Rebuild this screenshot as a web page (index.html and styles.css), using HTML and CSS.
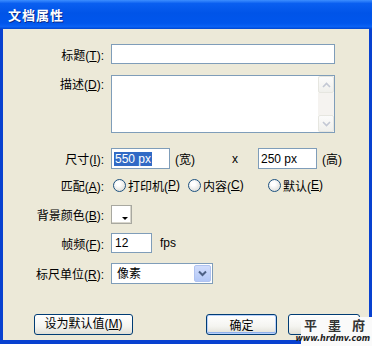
FILE: index.html
```html
<!DOCTYPE html>
<html lang="zh-CN">
<head>
<meta charset="utf-8">
<title>文档属性</title>
<link rel="stylesheet" href="styles.css">
</head>
<body>
<div class="window">
  <div class="titlebar"><span class="title">文档属性</span></div>
  <div class="frame">
    <div class="client">
      <div class="row r-title">
        <label class="label">标题(<u>T</u>):</label>
        <div class="input w-title"></div>
      </div>
      <div class="row r-desc">
        <label class="label top">描述(<u>D</u>):</label>
        <div class="textarea">
          <div class="scroll">
            <div class="sbtn"><svg width="9" height="6" viewBox="0 0 9 6"><path d="M1 5 L4.5 1.5 L8 5" fill="none" stroke="#c3c8d4" stroke-width="1.6"/></svg></div>
            <div class="strack"></div>
            <div class="sbtn"><svg width="9" height="6" viewBox="0 0 9 6"><path d="M1 1 L4.5 4.5 L8 1" fill="none" stroke="#c3c8d4" stroke-width="1.6"/></svg></div>
          </div>
        </div>
      </div>
      <div class="row r-size">
        <label class="label">尺寸(<u>I</u>):</label>
        <div class="input w-size"><span class="sel">550 px</span></div>
        <span class="unit1">(宽)</span>
        <span class="times">x</span>
        <div class="input w-size"><span class="val">250 px</span></div>
        <span class="unit2">(高)</span>
      </div>
      <div class="row r-match">
        <label class="label">匹配(<u>A</u>):</label>
        <span class="opt o1"><span class="radio"></span>打印机(<u>P</u>)</span>
        <span class="opt o2"><span class="radio"></span>内容(<u>C</u>)</span>
        <span class="opt o3"><span class="radio"></span>默认(<u>E</u>)</span>
      </div>
      <div class="row r-color">
        <label class="label">背景颜色(<u>B</u>):</label>
        <div class="swatch"><span class="tri"></span></div>
      </div>
      <div class="row r-fps">
        <label class="label">帧频(<u>F</u>):</label>
        <div class="input w-fps"><span class="val">12</span></div>
        <span class="fps">fps</span>
      </div>
      <div class="row r-ruler">
        <label class="label">标尺单位(<u>R</u>):</label>
        <div class="select">
          <span class="val">像素</span>
          <span class="arrow"><svg width="9" height="7" viewBox="0 0 9 7"><path d="M1 1.5 L4.5 5 L8 1.5" fill="none" stroke="#4d6185" stroke-width="2"/></svg></span>
        </div>
      </div>
      <div class="buttons">
        <button class="btn b-default">设为默认值(<u>M</u>)</button>
        <button class="btn b-ok">确定</button>
        <button class="btn b-cancel"></button>
      </div>
    </div>
  </div>
  <div class="watermark">
    <span class="wm-logo">平 墨 府</span>
    <span class="wm-url">www.hrdmv.com</span>
  </div>
</div>
</body>
</html>
```
FILE: styles.css
```css
* { box-sizing: border-box; }
html, body { margin: 0; padding: 0; background: #ffffff; }
body {
  width: 372px;
  height: 346px;
  overflow: hidden;
  font-family: "Liberation Sans", "Noto Sans CJK SC", sans-serif;
  font-size: 12px;
  color: #000;
}
.window {
  position: relative;
  width: 372px;
  height: 344px;
}
.titlebar {
  height: 29px;
  background: linear-gradient(#3d8eff 0%, #0a5ff0 12%, #0054e8 45%, #0056ec 80%, #0a62f5 92%, #0046d0 100%);
  display: flex;
  align-items: center;
  padding-left: 8px;
}
.title {
  color: #fff;
  font-family: "Noto Sans CJK SC", sans-serif;
  font-weight: bold;
  font-size: 13px;
  letter-spacing: 1px;
  text-shadow: 1px 1px 0 #0a2a8a;
}
.frame {
  height: 315px;
  border-left: 3px solid #0841d0;
  border-right: 3px solid #0841d0;
  border-bottom: 4px solid #0841d0;
  background: #ece9d8;
}
.client {
  padding-top: 15px;
  display: flex;
  flex-direction: column;
}
.row {
  display: flex;
  align-items: center;
}
.label {
  width: 101px;
  text-align: right;
  margin-right: 7px;
  flex: none;
  white-space: nowrap;
}
.label.top { align-self: flex-start; padding-top: 0px; }
u { text-decoration: underline; }

.input {
  height: 20px;
  background: #fff;
  border: 1px solid #7f9db9;
  display: flex;
  align-items: center;
  padding-left: 2px;
}
.w-title { width: 224px; }
.r-title { height: 20px; }

.r-desc { margin-top: 11px; align-items: flex-start; }
.textarea {
  width: 224px;
  height: 58px;
  background: #fff;
  border: 1px solid #7f9db9;
  display: flex;
  justify-content: flex-end;
}
.scroll {
  width: 16px;
  display: flex;
  flex-direction: column;
  background: #fbfbf8;
}
.sbtn {
  height: 17px;
  border: 1px solid #e6e6e0;
  background: linear-gradient(#fbfbfb, #f0f0ec);
  border-radius: 2px;
  display: flex;
  align-items: center;
  justify-content: center;
}
.strack { flex: 1; background: #f5f3f0; }

.r-size { margin-top: 15px; height: 21px; }
.w-size { width: 59px; height: 21px; }
.sel {
  background: #316ac5;
  color: #fff;
  padding: 0 1px;
  line-height: 14px;
}
.val { line-height: 14px; }
.unit1 { margin-left: 5px; width: 57px; }
.times { width: 26px; }
.unit2 { margin-left: 5px; }

.r-match { margin-top: 8px; height: 16px; }
.opt {
  display: flex;
  align-items: center;
  white-space: nowrap;
}
.o1 { margin-left: 2px; width: 75px; }
.o2 { width: 80px; }
.radio {
  width: 13px;
  height: 13px;
  border-radius: 50%;
  border: 1px solid #1c5180;
  background: radial-gradient(circle at 40% 35%, #ffffff 20%, #dcdcd6 85%);
  margin-right: 2px;
  flex: none;
}

.r-color { margin-top: 12px; height: 19px; }
.swatch {
  position: relative;
  width: 21px;
  height: 19px;
  background: #fff;
  border: 1px solid #a8a8a0;
  box-shadow: inset -1px -1px 0 #d8d6cc;
}
.tri {
  position: absolute;
  right: 3px;
  bottom: 3px;
  width: 0;
  height: 0;
  border-left: 3px solid transparent;
  border-right: 3px solid transparent;
  border-top: 3px solid #000;
}

.r-fps { margin-top: 9px; height: 20px; }
.w-fps { width: 41px; padding-left: 3px; }
.fps { margin-left: 8px; }

.r-ruler { margin-top: 10px; height: 21px; }
.select {
  width: 102px;
  height: 21px;
  background: #fff;
  border: 1px solid #7f9db9;
  display: flex;
  align-items: center;
  justify-content: space-between;
  padding: 1px;
  padding-left: 5px;
}
.arrow {
  width: 17px;
  height: 17px;
  background: linear-gradient(#d1ddfc, #b3c8f7);
  border: 1px solid #b0c3f0;
  border-radius: 2px;
  display: flex;
  align-items: center;
  justify-content: center;
}

.buttons {
  margin-top: 30px;
  display: flex;
  padding-left: 31px;
}
.btn {
  height: 21px;
  font-family: "Noto Sans CJK SC", "Liberation Sans", sans-serif;
  font-size: 12px;
  color: #000;
  border: 1px solid #003c74;
  border-radius: 3px;
  background: linear-gradient(#ffffff 0%, #f4f4f0 60%, #e0dfd6 100%);
  padding: 0;
  line-height: 17px;
}
.b-default { width: 99px; font-family: "Liberation Sans", "Noto Sans CJK SC", sans-serif; }
.b-ok {
  width: 71px;
  margin-left: 73px;
  box-shadow: inset 0 0 0 1px #b9d1fa, inset 0 -1px 0 1px #8fb0ec;
}
.b-cancel { width: 72px; margin-left: 11px; }

.watermark {
  position: absolute;
  left: 301px;
  top: 317px;
  width: 71px;
  height: 29px;
  background: #fafafa;
  display: flex;
  flex-direction: column;
  align-items: center;
}
.wm-logo {
  font-family: "Noto Sans CJK SC", serif;
  font-weight: bold;
  font-size: 13px;
  line-height: 16px;
  color: #333;
  letter-spacing: 4px;
}
.wm-url {
  font-family: "DejaVu Sans", sans-serif;
  font-style: italic;
  font-weight: bold;
  font-size: 8px;
  line-height: 11px;
  color: #222;
  align-self: flex-end;
  margin-right: 2px;
}
```
